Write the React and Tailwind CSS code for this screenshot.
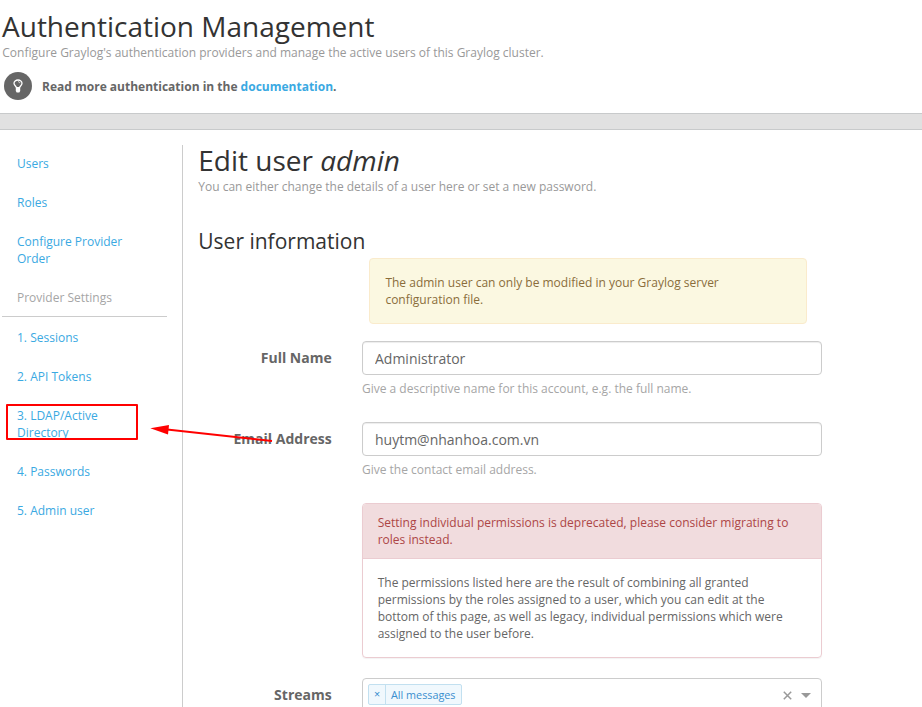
const providerLinks = ['1. Sessions', '2. API Tokens', '3. LDAP/Active Directory', '4. Passwords', '5. Admin user'];

function NavItem({ children, marked }) {
  return (
    <li className="relative px-[15px] py-[10px]">
      <a href="#" className="block text-[#3aa9e2]">{children}</a>
      {marked && (
        <>
          <span className="absolute left-[4px] top-[7px] h-[36px] w-[132px] rounded-[1px] border-2 border-[#f00]" />
          <svg className="absolute left-[148px] top-[24px] z-10 overflow-visible" width="124" height="24" viewBox="0 0 124 24">
            <path d="M17 8.500L122 20" stroke="#f00" strokeWidth="2" fill="none" />
            <path d="M0.300 7.300L19 4L18 13.500Z" fill="#f00" />
          </svg>
        </>
      )}
    </li>
  );
}

function Field({ label, children }) {
  return (
    <div className="flex">
      <label className="mr-[30.3px] w-[133.7px] shrink-0 pt-[7px] text-right text-[14px] font-bold leading-5 text-[#666]">{label}</label>
      <div className="w-[460px]">{children}</div>
    </div>
  );
}

function TextField({ label, value, help }) {
  return (
    <Field label={label}>
      <input
        readOnly
        value={value}
        className="block h-[34px] w-full rounded-[4px] border border-[#ccc] bg-white px-3 text-[14px] text-[#666] shadow-[inset_0_1px_1px_rgba(0,0,0,0.075)] outline-none"
      />
      <p className="mt-[5px] text-[#a6a6a6]">{help}</p>
    </Field>
  );
}

export default function App() {
  return (
    <div className="h-[707px] w-full overflow-hidden bg-white font-['Open_Sans',sans-serif] text-[12px] leading-[17px] text-[#666]">
      <header className="h-[113px] pl-[2px] pt-[11px]">
        <h1 className="text-[28px] leading-[31px] text-[#333]">Authentication Management</h1>
        <p className="mt-[2px] pl-[0.3px] text-[#999]">Configure Graylog's authentication providers and manage the active users of this Graylog cluster.</p>
        <div className="mt-[11px] flex items-center pl-[2px]">
          <span className="flex h-[28px] w-[28px] items-center justify-center rounded-full bg-[#666]">
            <svg width="12" height="16" viewBox="0 0 12 16" fill="none" stroke="#fff">
              <path d="M4.300 9.500C4.300 8.300 2 7.500 2 5.300a4 3.300 0 0 1 8 0c0 2.200-2.300 3-2.300 4.200" strokeWidth="1.300" />
              <path d="M3.800 9h4.400v4L7.300 14.500H4.700L3.800 13z" fill="#fff" stroke="none" />
              <path d="M6 3.700c1.200 0 1.900.6 1.900 1.500" strokeWidth=".8" />
            </svg>
          </span>
          <p className="ml-[10px] font-bold">
            Read more authentication in the <a href="#" className="text-[#3aa9e2]">documentation</a>.
          </p>
        </div>
      </header>
      <div className="h-[17px] border-y border-[#c8cacb] bg-[#e1e1e1]" />
      <div className="flex pt-[15px]">
        <nav className="w-[183px] shrink-0 border-r border-[#ccc] pl-[2px] pr-[15px]">
          <ul className="flex flex-col gap-[2px]">
            <NavItem>Users</NavItem>
            <NavItem>Roles</NavItem>
            <NavItem>Configure Provider Order</NavItem>
            <li className="mt-[1px] border-b border-[#ccc] px-[15px] pb-[10px] pt-[9px] text-[#a6a6a6]">Provider Settings</li>
            {providerLinks.map((link) => (
              <NavItem key={link} marked={link.startsWith('3.')}>{link}</NavItem>
            ))}
          </ul>
        </nav>
        <main className="h-[600px] pl-[15px]">
          <h1 className="pl-[0.3px] text-[28px] leading-[31px] text-[#333]">Edit user <em>admin</em></h1>
          <p className="mt-[2px] pl-[0.3px] text-[#999]">You can either change the details of a user here or set a new password.</p>
          <h2 className="mt-[34px] pl-[0.3px] text-[21px] leading-[24px] text-[#333]">User information</h2>
          <div className="ml-[171px] mt-[5px] h-[66px] w-[438px] rounded-[4px] border border-[#faebcc] bg-[#fbf8e1] px-[15.4px] py-[15px] text-[#8a6d3b]">
            The admin user can only be modified in your Graylog server configuration file.
          </div>
          <div className="mt-[17px] flex flex-col gap-[25px]">
            <TextField label="Full Name" value="Administrator" help="Give a descriptive name for this account, e.g. the full name." />
            <TextField label="Email Address" value="huytm@nhanhoa.com.vn" help="Give the contact email address." />
          </div>
          <section className="ml-[164px] mt-[25px] h-[155px] w-[460px] rounded-[4px] border border-[#ebccd1] shadow-[0_1px_1px_rgba(0,0,0,0.05)]">
            <h3 className="rounded-t-[3px] border-b border-[#ebccd1] bg-[#f1dcde] px-[14.7px] py-[10px] text-[#ad4646]">
              Setting individual permissions is deprecated, please consider migrating to roles instead.
            </h3>
            <p className="px-[14.7px] pt-[15px]">
              The permissions listed here are the result of combining all granted permissions by the roles assigned to a user, which you can edit at the bottom of this page, as well as legacy, individual permissions which were assigned to the user before.
            </p>
          </section>
          <div className="mt-5">
            <Field label="Streams">
              <div className="flex h-[36px] items-start rounded-[4px] border border-[#ccc] pl-[5px] pr-[10px] pt-[5px]">
                <div className="flex h-[21px] w-[94px] rounded-[2px] border border-[#c2e0f0] bg-[#f0f8fd] text-[10.8px] leading-[20px] text-[#3a8fcf]">
                  <span className="w-[17px] shrink-0 border-r border-[#c2e0f0] text-center leading-[18px]">×</span>
                  <span className="whitespace-nowrap pl-[5px]">All messages</span>
                </div>
                <div className="ml-auto flex items-center gap-[9px] pt-[7px]">
                  <svg width="9" height="9" viewBox="0 0 9 9" stroke="#999" strokeWidth="1.500"><path d="M.8.8l7.400 7.400M8.200.8L.8 8.200" /></svg>
                  <svg width="10" height="5" viewBox="0 0 10 5" fill="#999"><path d="M0 0h10L5 5z" /></svg>
                </div>
              </div>
            </Field>
          </div>
        </main>
      </div>
    </div>
  );
}
